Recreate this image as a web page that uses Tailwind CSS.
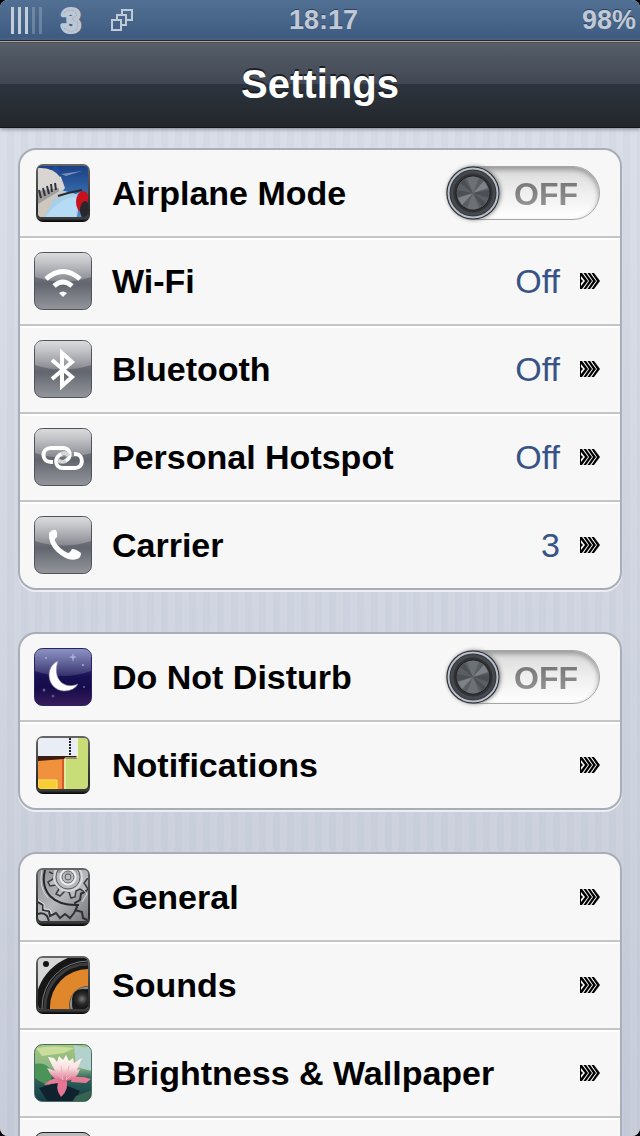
<!DOCTYPE html>
<html lang="en">
  <head>
    <meta charset="UTF-8" />
    <meta name="viewport" content="width=device-width, initial-scale=1.0" />
    <title>Settings</title>
    <script src="https://cdn.jsdelivr.net/npm/@tailwindcss/browser@4"></script>
  </head>
  <body class="bg-black font-['Liberation_Sans',Arial,sans-serif]">
    <!-- Shared drawings -->
    <svg class="absolute h-0 w-0" aria-hidden="true">
      <defs>
        <linearGradient id="gray" x1="0" y1="0" x2="0" y2="1">
          <stop offset="0" stop-color="#a2a4a9" />
          <stop offset="0.4" stop-color="#72757d" />
          <stop offset="0.55" stop-color="#62656e" />
          <stop offset="1" stop-color="#93979c" />
        </linearGradient>
        <linearGradient id="gloss" x1="0" y1="0" x2="0" y2="1">
          <stop offset="0" stop-color="#fff" stop-opacity="0.6" />
          <stop offset="1" stop-color="#fff" stop-opacity="0.2" />
        </linearGradient>
        <linearGradient id="night" x1="0" y1="0" x2="0" y2="1">
          <stop offset="0" stop-color="#4c56a0" />
          <stop offset="0.5" stop-color="#171052" />
          <stop offset="0.7" stop-color="#170c4a" />
          <stop offset="1" stop-color="#3a1b5c" />
        </linearGradient>
        <linearGradient id="sky" x1="0" y1="0" x2="0" y2="1">
          <stop offset="0" stop-color="#1b3f85" />
          <stop offset="1" stop-color="#4d8fcb" />
        </linearGradient>
        <linearGradient id="steel" x1="0" y1="0" x2="1" y2="1">
          <stop offset="0" stop-color="#8d8f93" />
          <stop offset="0.5" stop-color="#b5b7ba" />
          <stop offset="1" stop-color="#77797d" />
        </linearGradient>
        <linearGradient id="rim" x1="0" y1="0" x2="0" y2="1">
          <stop offset="0" stop-color="#666" />
          <stop offset="0.8" stop-color="#2a2a2a" />
          <stop offset="0.94" stop-color="#3c3c3c" />
          <stop offset="1" stop-color="#000" />
        </linearGradient>
        <linearGradient id="leafbg" x1="0" y1="0" x2="0" y2="1">
          <stop offset="0" stop-color="#a5c878" />
          <stop offset="0.4" stop-color="#8bb587" />
          <stop offset="0.6" stop-color="#2c6257" />
          <stop offset="1" stop-color="#153b47" />
        </linearGradient>
        <linearGradient id="petal" x1="0" y1="0" x2="0" y2="1">
          <stop offset="0" stop-color="#fffdf4" />
          <stop offset="0.5" stop-color="#f9dfe0" />
          <stop offset="1" stop-color="#dc6685" />
        </linearGradient>
        <radialGradient id="cone">
          <stop offset="0" stop-color="#777" />
          <stop offset="0.5" stop-color="#2c2c2c" />
          <stop offset="1" stop-color="#111" />
        </radialGradient>
        <clipPath id="photo"><rect x="4" y="2" width="50" height="51" rx="4" /></clipPath>
        <clipPath id="tile"><rect x="1" y="1" width="56" height="56" rx="8" /></clipPath>
        <symbol id="arrows" viewBox="0 0 20 16">
          <path fill-rule="evenodd" d="M0 0h2l6 8-6 8H0ZM1 3v3l2 2-2 2v3l4-5Z" />
          <path d="M3.500 0h2.500l6 8-6 8H3.500l5.500-8ZM7.500 0h2.500l6 8-6 8H7.500l5.500-8ZM11.500 0h2.500l6 8-6 8h-2.500l5.500-8Z" />
        </symbol>
        <symbol id="grayTile" viewBox="0 0 58 58">
          <rect x="0.5" y="0.5" width="57" height="57" rx="8" fill="url(#gray)" stroke="#50535c" />
          <path d="M1 8Q1 1 9 1H49Q57 1 57 8V25Q29 34 1 25Z" fill="url(#gloss)" />
        </symbol>
        <symbol id="knob" viewBox="0 0 54 54">
          <circle cx="27" cy="27" r="26.5" fill="#25272b" />
          <circle cx="27" cy="27" r="24.5" fill="#35373b" stroke="#b9bfcb" stroke-width="2" />
          <circle cx="27" cy="27" r="21" fill="#303236" stroke="#45484c" stroke-width="3" />
          <circle cx="27" cy="27" r="17" fill="#5b5f64" stroke="#1d1f21" stroke-width="1" />
          <path d="M27 27 21 12q6-3 12 0ZM27 27 33 42q-6 3-12 0Z" fill="#6c7176" />
          <path d="M27 27 38 15l4 7ZM27 27 16 39l-4-7Z" fill="#7e8389" />
          <path d="M27 27 11 24v7ZM27 27 43 24v8Z" fill="#4c5055" />
          <path d="M27 27 14 17l4-4ZM27 27 40 37l-4 4Z" fill="#4c5055" />
        </symbol>
      </defs>
    </svg>

    <div class="flex h-screen flex-col overflow-hidden rounded-lg bg-[#ccd1dd]">
      <!-- Status bar -->
      <div
        class="grid h-10 shrink-0 grid-cols-3 items-center bg-linear-to-b from-[#526f94] to-[#3d5a80] pr-1 pl-[11px] text-[27px] leading-10 font-bold text-[#c0c9d5] text-shadow-[0_-1px_0_#2d4260]"
      >
        <div class="flex items-center gap-3">
          <svg class="h-[27px] w-8" viewBox="0 0 32 27" fill="#c3ccd9" aria-hidden="true">
            <path d="M0 0h3v27H0ZM7 0h3v27H7ZM14 0h3v27h-3Z" />
            <path d="M21 0h3v27h-3ZM28 0h3v27h-3Z" opacity="0.3" />
          </svg>
          <svg class="h-10 w-8 overflow-visible" viewBox="0 0 32 40">
            <text
              x="16"
              y="32"
              text-anchor="middle"
              class="text-[34px] font-bold text-shadow-none"
              fill="#bdc7d4"
              stroke="#bdc7d4"
              stroke-width="4"
              stroke-linejoin="round"
            >
              3
            </text>
            <path d="M9 13l5-3 6 1 2 4-5 4 6 4-1 6-6 3-7-4" fill="none" stroke="#a3b0c2" stroke-dasharray="3 1" />
          </svg>
          <svg class="ml-3 h-[22px] w-[22px]" viewBox="0 0 22 22" fill="none" stroke="#c0cad7" stroke-width="2" aria-hidden="true">
            <path d="M1 11h9v10H1ZM6 11V6h9v10h-5M11 6V1h10v10h-6" />
          </svg>
        </div>
        <div class="text-center">18:17</div>
        <div class="text-right">98%</div>
      </div>

      <!-- Navigation bar -->
      <header
        class="relative z-10 flex h-[88px] shrink-0 items-center justify-center border-t border-b border-t-[#252a30] border-b-[#111417] bg-linear-to-b from-[#56606a] from-0% via-[#424853] via-50% to-[#23272c] shadow-[inset_0_1px_0_#a3a3a3,inset_0_2px_0_#56504c,0_1px_4px_#777c88]"
      >
        <div class="absolute inset-x-0 top-[43px] bottom-0 bg-linear-to-b from-[#2d343e] to-[#23272b]" aria-hidden="true"></div>
        <h1 class="relative text-[40px] leading-10 font-bold text-white text-shadow-[0_-2px_0_#1c2026]">Settings</h1>
      </header>

      <main
        class="flex min-h-0 flex-1 flex-col gap-[42px] overflow-hidden bg-[repeating-linear-gradient(90deg,#ffffff08_0_7px,#8f9ab50c_7px_14px),linear-gradient(#d8dde7,#c6cbd8)] px-[18px] pt-5"
      >
        <ul
          class="shrink-0 divide-y-2 divide-[#c5c5c7] overflow-hidden rounded-[18px] border-2 border-[#a8adb7] bg-[#f7f7f7] shadow-[0_2px_0_#eceef3]"
        >
          <li class="flex items-center gap-5 py-[14px] pr-5 pl-[14px]">
            <svg class="h-[58px] w-[58px] shrink-0" viewBox="0 0 58 58" aria-hidden="true">
              <rect x="2" y="0" width="54" height="58" rx="7" fill="url(#rim)" />
              <g clip-path="url(#photo)">
                <rect x="4" y="2" width="50" height="51" fill="url(#sky)" />
                <path d="M4 4Q18 3 27 13L31 24 25 31 4 41Z" fill="#d9d5d2" />
                <path d="M4 27 25 24 25 30 4 43Z" fill="#a39b98" />
                <path d="M21 1 27 8 26 13 19 5Z" fill="#244b9c" />
                <path d="M27 10 48 7 32 12Z" fill="#7892b6" />
                <path d="M5 26l2 8M9 24l2 8M13 22l2 8M17 20l1 8M21 19l1 7" stroke="#2d3441" stroke-width="2" />
                <path d="M4 53V40L27 26 42 30 47 28 43 53Z" fill="#a9cee8" />
                <path d="M4 41 26 27 32 29 20 35 10 53H4Z" fill="#cfc6bd" />
                <path d="M24 32 34 29 48 26" fill="none" stroke="#272b35" stroke-width="2" />
                <path d="M12 53Q24 34 44 32L42 53Z" fill="#b5dcf4" />
                <ellipse cx="49" cy="38" rx="7" ry="11" fill="#c9111d" />
                <ellipse cx="51" cy="46" rx="5" ry="9" fill="#29262d" />
              </g>
            </svg>
            <label for="airplane" class="flex-1 text-[34px] leading-10 font-bold">Airplane Mode</label>
            <span class="relative -my-1 flex">
              <input
                id="airplane"
                type="checkbox"
                class="h-[54px] w-[154px] appearance-none rounded-full border border-[#a6a6a6] bg-linear-to-b from-[#d9d9d9] from-0% via-[#efefef] via-50% to-white shadow-[inset_0_3px_5px_#999]"
              />
              <svg class="pointer-events-none absolute top-0 left-0 h-[54px] w-[54px] drop-shadow-[1px_0_2px_#777]"><use href="#knob" /></svg>
              <span
                class="pointer-events-none absolute top-0 left-[68px] bg-linear-to-b from-[#666] to-[#a5a5a5] bg-clip-text text-[32px] leading-[56px] font-bold text-transparent"
                >OFF</span
              >
            </span>
          </li>
          <li class="shadow-[inset_0_2px_0_#fff]">
            <a href="#wifi" class="flex items-center gap-5 py-[14px] pr-5 pl-[14px]">
              <svg class="h-[58px] w-[58px] shrink-0" viewBox="0 0 58 58" aria-hidden="true">
                <use href="#grayTile" />
                <g fill="none" stroke="#fff" stroke-width="5">
                  <path d="M12 27Q29 12 46 27" />
                  <path d="M20 34Q29 26 38 34" />
                </g>
                <path d="M25 41Q29 38 33 41L29 45Z" fill="#fff" />
              </svg>
              <span class="flex-1 text-[34px] leading-10 font-bold">Wi-Fi</span>
              <span class="text-[34px] leading-10 text-[#385487]">Off</span>
              <svg class="h-4 w-5" aria-hidden="true"><use href="#arrows" /></svg>
            </a>
          </li>
          <li class="shadow-[inset_0_2px_0_#fff]">
            <a href="#bluetooth" class="flex items-center gap-5 py-[14px] pr-5 pl-[14px]">
              <svg class="h-[58px] w-[58px] shrink-0" viewBox="0 0 58 58" aria-hidden="true">
                <use href="#grayTile" />
                <path d="M18 20 38 37 28 46V13L38 22 18 39" fill="none" stroke="#fff" stroke-width="4" />
              </svg>
              <span class="flex-1 text-[34px] leading-10 font-bold">Bluetooth</span>
              <span class="text-[34px] leading-10 text-[#385487]">Off</span>
              <svg class="h-4 w-5" aria-hidden="true"><use href="#arrows" /></svg>
            </a>
          </li>
          <li class="shadow-[inset_0_2px_0_#fff]">
            <a href="#hotspot" class="flex items-center gap-5 py-[14px] pr-5 pl-[14px]">
              <svg class="h-[58px] w-[58px] shrink-0" viewBox="0 0 58 58" aria-hidden="true">
                <use href="#grayTile" />
                <g fill="none" stroke="#fff" stroke-width="4">
                  <path d="M19 34H17C7 34 7 20 17 20H29C37 20 38 30 31 33" />
                  <path d="M40 26H42C50 27 50 40 41 40H29C20 40 20 28 28 26" />
                  <path d="M27 26Q32 24 35 28M32 33Q27 35 24 32" stroke="#d5d6d8" />
                </g>
              </svg>
              <span class="flex-1 text-[34px] leading-10 font-bold">Personal Hotspot</span>
              <span class="text-[34px] leading-10 text-[#385487]">Off</span>
              <svg class="h-4 w-5" aria-hidden="true"><use href="#arrows" /></svg>
            </a>
          </li>
          <li class="shadow-[inset_0_2px_0_#fff]">
            <a href="#carrier" class="flex items-center gap-5 py-[14px] pr-5 pl-[14px]">
              <svg class="h-[58px] w-[58px] shrink-0" viewBox="0 0 58 58" aria-hidden="true">
                <use href="#grayTile" />
                <path
                  d="M15 17Q18 13 22 14Q24 17 23 21Q20 23 21 25Q25 33 34 37Q36 37 38 33Q42 33 47 37Q47 42 43 43Q34 46 23 36Q14 28 15 17Z"
                  fill="#fff"
                />
              </svg>
              <span class="flex-1 text-[34px] leading-10 font-bold">Carrier</span>
              <span class="text-[34px] leading-10 text-[#385487]">3</span>
              <svg class="h-4 w-5" aria-hidden="true"><use href="#arrows" /></svg>
            </a>
          </li>
        </ul>

        <ul
          class="shrink-0 divide-y-2 divide-[#c5c5c7] overflow-hidden rounded-[18px] border-2 border-[#a8adb7] bg-[#f7f7f7] shadow-[0_2px_0_#eceef3]"
        >
          <li class="flex items-center gap-5 py-[14px] pr-5 pl-[14px]">
            <svg class="h-[58px] w-[58px] shrink-0" viewBox="0 0 58 58" aria-hidden="true">
              <rect x="0.5" y="0.5" width="57" height="57" rx="8" fill="url(#night)" stroke="#29245f" />
              <path d="M1 8Q1 1 9 1H49Q57 1 57 8V23Q29 33 1 23Z" fill="url(#gloss)" opacity="0.6" />
              <g fill="#a8aee0">
                <path d="M39 5l1 3 3 1-3 1-1 4-1-4-3-1 3-1Z" />
                <circle cx="12" cy="10" r="1" />
                <circle cx="49" cy="17" r="1" />
                <circle cx="50" cy="39" r="1" opacity="0.6" />
                <circle cx="10" cy="42" r="1.500" opacity="0.5" />
                <circle cx="19" cy="48" r="1.500" opacity="0.4" />
              </g>
              <path d="M24 13C10 19 13 42 30 43Q40 43 44 36C30 42 18 31 24 13Z" fill="#fff" stroke="#8d87ad" stroke-opacity="0.6" />
            </svg>
            <label for="dnd" class="flex-1 text-[34px] leading-10 font-bold">Do Not Disturb</label>
            <span class="relative -my-1 flex">
              <input
                id="dnd"
                type="checkbox"
                class="h-[54px] w-[154px] appearance-none rounded-full border border-[#a6a6a6] bg-linear-to-b from-[#d9d9d9] from-0% via-[#efefef] via-50% to-white shadow-[inset_0_3px_5px_#999]"
              />
              <svg class="pointer-events-none absolute top-0 left-0 h-[54px] w-[54px] drop-shadow-[1px_0_2px_#777]"><use href="#knob" /></svg>
              <span
                class="pointer-events-none absolute top-0 left-[68px] bg-linear-to-b from-[#666] to-[#a5a5a5] bg-clip-text text-[32px] leading-[56px] font-bold text-transparent"
                >OFF</span
              >
            </span>
          </li>
          <li class="shadow-[inset_0_2px_0_#fff]">
            <a href="#notifications" class="flex items-center gap-5 py-[14px] pr-5 pl-[14px]">
              <svg class="h-[58px] w-[58px] shrink-0" viewBox="0 0 58 58" aria-hidden="true">
                <rect x="2" y="0" width="54" height="58" rx="7" fill="url(#rim)" />
                <g clip-path="url(#photo)">
                  <rect x="4" y="2" width="50" height="51" fill="#c8dc77" />
                  <path d="M4 21H30V53H4Z" fill="#f0923d" />
                  <path d="M4 20H43V23H30L4 25Z" fill="#3a1c10" />
                  <path d="M29 23V53" stroke="#d9572a" stroke-width="2" />
                  <path d="M4 44H23V53H4Z" fill="#f7cd32" stroke="#ffe76b" />
                  <path d="M4 2H44V20H4Z" fill="#e9edf5" />
                  <path d="M43 2V22H31V53" fill="none" stroke="#f2f8cf" />
                  <path d="M36 2V20" stroke="#222" stroke-width="2" stroke-dasharray="2 1" />
                </g>
              </svg>
              <span class="flex-1 text-[34px] leading-10 font-bold">Notifications</span>
              <svg class="h-4 w-5" aria-hidden="true"><use href="#arrows" /></svg>
            </a>
          </li>
        </ul>

        <ul
          class="shrink-0 divide-y-2 divide-[#c5c5c7] overflow-hidden rounded-[18px] border-2 border-[#a8adb7] bg-[#f7f7f7] shadow-[0_2px_0_#eceef3]"
        >
          <li>
            <a href="#general" class="flex items-center gap-5 py-[14px] pr-5 pl-[14px]">
              <svg class="h-[58px] w-[58px] shrink-0" viewBox="0 0 58 58" aria-hidden="true">
                <rect x="2" y="0" width="54" height="58" rx="7" fill="url(#rim)" />
                <g clip-path="url(#photo)">
                  <rect x="4" y="2" width="50" height="51" fill="url(#steel)" />
                  <path d="M11 2Q7 18 16 28Q26 38 45 37" fill="none" stroke="#27282a" stroke-width="2" />
                  <path d="M8 2Q4 19 14 30" fill="none" stroke="#d5d6d8" />
                  <path
                    d="M15 4l5 2-1 5-5 3 2 4 6-1 3 4-3 5 4 2 5-5 4 1 2 6 4-1 1-6 4-2 5 3 3-3-4-6 3-4 5-2"
                    fill="#b9bbbe"
                    stroke="#3c3d40"
                    stroke-width="1.500"
                  />
                  <g fill="none" stroke="#5b5d61">
                    <circle cx="34" cy="9" r="14" stroke="#d7d8da" stroke-width="2" />
                    <circle cx="34" cy="9" r="12" />
                    <circle cx="34" cy="9" r="7" stroke="#eee" stroke-width="3" />
                    <circle cx="34" cy="9" r="6" />
                    <circle cx="34" cy="9" r="3" />
                  </g>
                  <path
                    d="M4 34l5 3v5l6 1 1 5 6-3 4 5 5-4 5 4 4-5 3-6-2-4 5-3 1-6 5-3M4 46q5-2 9 2l2 5M46 26l5-2M41 42l7 2 1 6 4 2"
                    fill="none"
                    stroke="#303134"
                    stroke-width="2"
                  />
                  <path d="M4 32l6 4v5l6 1 2 4M49 21l4 5-5 8" fill="none" stroke="#dddee0" />
                </g>
              </svg>
              <span class="flex-1 text-[34px] leading-10 font-bold">General</span>
              <svg class="h-4 w-5" aria-hidden="true"><use href="#arrows" /></svg>
            </a>
          </li>
          <li class="shadow-[inset_0_2px_0_#fff]">
            <a href="#sounds" class="flex items-center gap-5 py-[14px] pr-5 pl-[14px]">
              <svg class="h-[58px] w-[58px] shrink-0" viewBox="0 0 58 58" aria-hidden="true">
                <rect x="2" y="0" width="54" height="58" rx="7" fill="url(#rim)" />
                <g clip-path="url(#photo)">
                  <rect x="4" y="2" width="50" height="51" fill="#d6d6d7" />
                  <circle cx="54" cy="51" r="53" fill="#161616" />
                  <circle cx="54" cy="51" r="46" fill="none" stroke="#777a7d" />
                  <circle cx="54" cy="51" r="43" fill="none" stroke="#3b3c3d" stroke-width="3" />
                  <circle cx="54" cy="51" r="38" fill="#e0872b" />
                  <circle cx="54" cy="49" r="19" fill="#66533d" />
                  <circle cx="53" cy="48" r="17" fill="#8b8e91" />
                  <circle cx="53" cy="48" r="15" fill="#1b1b1b" />
                  <circle cx="48" cy="43" r="10" fill="url(#cone)" />
                  <circle cx="12" cy="8" r="3" fill="#111" />
                </g>
              </svg>
              <span class="flex-1 text-[34px] leading-10 font-bold">Sounds</span>
              <svg class="h-4 w-5" aria-hidden="true"><use href="#arrows" /></svg>
            </a>
          </li>
          <li class="shadow-[inset_0_2px_0_#fff]">
            <a href="#brightness" class="flex items-center gap-5 py-[14px] pr-5 pl-[14px]">
              <svg class="h-[58px] w-[58px] shrink-0" viewBox="0 0 58 58" aria-hidden="true">
                <rect x="0.5" y="0.5" width="57" height="57" rx="8" fill="url(#leafbg)" stroke="#466d68" />
                <g clip-path="url(#tile)">
                  <path d="M0 20Q14 17 18 29L16 41Q6 39 0 33Z" fill="#4c9358" />
                  <path d="M40 1Q50 5 58 2V27L42 23Z" fill="#b4d2cd" />
                  <path d="M2 4Q20 1 40 4L30 9 8 12Z" fill="#c9dd9c" />
                  <path d="M5 44 24 38 46 47 40 58H14Z" fill="#10222d" />
                  <path d="M42 52 58 46V58H38Z" fill="#38634f" />
                  <path d="M10 41Q17 33 27 34L24 39ZM38 33Q49 32 57 35L52 39 37 38Z" fill="#e77c98" />
                  <path d="M26 34Q20 44 27 53Q36 45 32 34Z" fill="#e47694" />
                  <path
                    d="M13 24 21 27 14 13 20 14 23 18 25 12 29 16 32 11 35 17 39 14 40 19 48 14 43 26 46 25Q43 36 32 37Q20 39 13 24Z"
                    fill="url(#petal)"
                  />
                  <path d="M21 27 29 36 27 22M35 22 32 36 41 27" fill="none" stroke="#eab5bd" />
                </g>
              </svg>
              <span class="flex-1 text-[34px] leading-10 font-bold">Brightness &amp; Wallpaper</span>
              <svg class="h-4 w-5" aria-hidden="true"><use href="#arrows" /></svg>
            </a>
          </li>
          <li class="py-[14px] pl-[14px] shadow-[inset_0_2px_0_#fff]">
            <svg class="h-[58px] w-[58px]" viewBox="0 0 58 58" aria-hidden="true">
              <rect x="1" y="0.5" width="56" height="57" rx="8" fill="#bdbabf" stroke="#222" />
            </svg>
          </li>
        </ul>
      </main>
    </div>
  </body>
</html>
